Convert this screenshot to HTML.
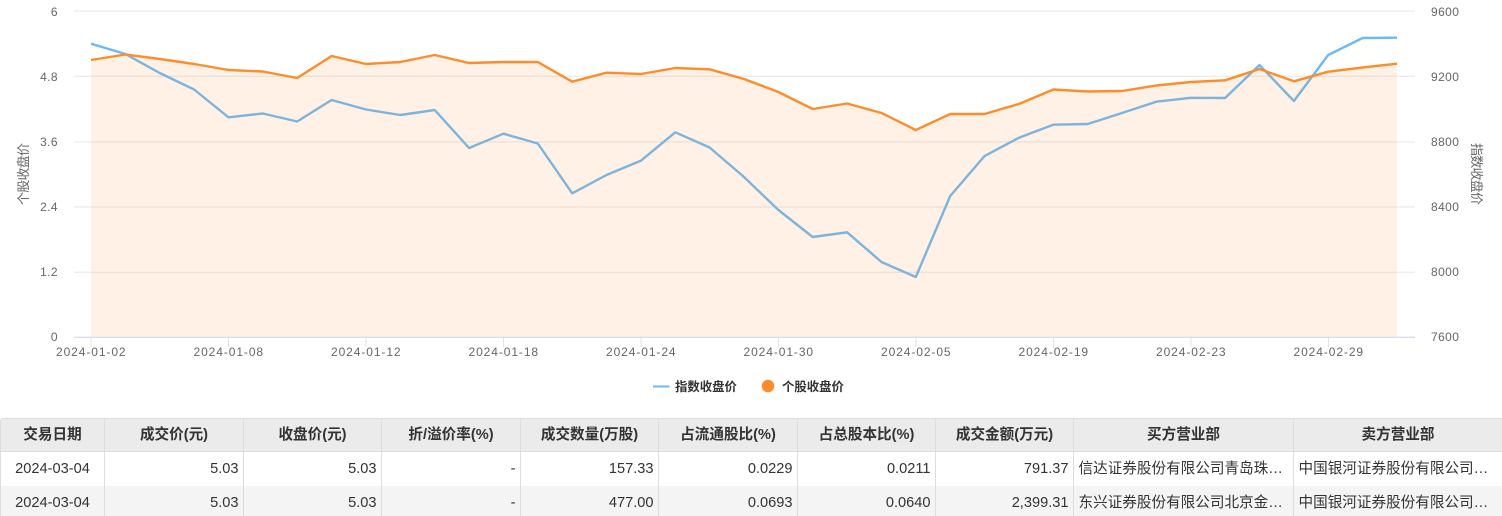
<!DOCTYPE html>
<html lang="zh-CN">
<head>
<meta charset="utf-8">
<title>成交走势</title>
<style>
html,body{margin:0;padding:0;background:#fff;width:1502px;height:516px;overflow:hidden}
body{position:relative;font-family:"Liberation Sans","Noto Sans CJK SC",sans-serif;color:#333}
svg{position:absolute;left:0;top:0}
svg text{font-family:"Liberation Sans","Noto Sans CJK SC",sans-serif}
.ax{font-size:12px;fill:#666;letter-spacing:.4px}
.nm{font-size:13px;fill:#666}
.lg{font-size:12.4px;font-weight:bold;fill:#333}
.c{position:absolute;box-sizing:border-box;white-space:nowrap;overflow:hidden;font-size:14.6px;line-height:34px;height:34px;color:#333}
.h{font-weight:bold;text-align:center;background:#ebebeb;top:418px;height:34px;line-height:32px;border-top:1px solid #ddd;border-bottom:1px solid #ddd;border-right:1px solid #ddd}
.r1,.r2{border-right:1px solid #ddd;text-align:right;padding-right:4.5px}
.r1{top:452px;background:#fff}
.r2{top:486px;background:#f4f4f4;height:30px}
.ctr{text-align:center;padding-right:0}
.lft{text-align:left;padding-right:0;padding-left:4.5px}
</style>
</head>
<body>
<svg width="1502" height="400" viewBox="0 0 1502 400" xmlns="http://www.w3.org/2000/svg">
  <g stroke="#e6e6e6" stroke-width="1" fill="none">
    <path d="M74 11H1415M74 76.3H1415M74 141.9H1415M74 207H1415M74 272.3H1415"/>
  </g>
  <polyline fill="none" stroke="#6db9f4" stroke-width="2.4" stroke-linejoin="round" points="91,43.7 125.4,54 159.7,73 194.1,89.5 228.5,117.3 262.8,113.5 297.2,121.5 331.6,100 366,109.5 400.3,115 434.7,110 469.1,148 503.4,133.7 537.8,143.5 572.2,193.3 606.5,175 640.9,160.7 675.3,132.3 709.6,147.5 744,177 778.4,210 812.7,237 847.1,232.3 881.5,262 915.8,277 950.2,196 984.6,156 1018.9,137.7 1053.3,124.7 1087.7,124 1122,113 1156.4,101.7 1190.8,97.8 1225.1,98 1259.5,65 1293.9,101 1328.2,55 1362.6,38 1397,37.7"/>
  <polygon fill="#ff8c2b" fill-opacity="0.12" points="91,337 91,60 125.4,54.5 159.7,59 194.1,64 228.5,70 262.8,71.5 297.2,78 331.6,56 366,64 400.3,62 434.7,55 469.1,63 503.4,62 537.8,62 572.2,81.7 606.5,72.7 640.9,74 675.3,68 709.6,69.3 744,79 778.4,92 812.7,109 847.1,103.5 881.5,113 915.8,130 950.2,114 984.6,114 1018.9,104 1053.3,89.5 1087.7,91.5 1122,91 1156.4,85.5 1190.8,82 1225.1,80.3 1259.5,69 1293.9,81.3 1328.2,71.7 1362.6,67.5 1397,63.7 1397,337"/>
  <polyline fill="none" stroke="#ff8c2b" stroke-width="2.4" stroke-linejoin="round" points="91,60 125.4,54.5 159.7,59 194.1,64 228.5,70 262.8,71.5 297.2,78 331.6,56 366,64 400.3,62 434.7,55 469.1,63 503.4,62 537.8,62 572.2,81.7 606.5,72.7 640.9,74 675.3,68 709.6,69.3 744,79 778.4,92 812.7,109 847.1,103.5 881.5,113 915.8,130 950.2,114 984.6,114 1018.9,104 1053.3,89.5 1087.7,91.5 1122,91 1156.4,85.5 1190.8,82 1225.1,80.3 1259.5,69 1293.9,81.3 1328.2,71.7 1362.6,67.5 1397,63.7"/>
  <path d="M74 337.3H1415" stroke="#d8deef" stroke-width="1.3" fill="none"/>
  <path d="M91 338V347M228.5 338V347M366 338V347M503.5 338V347M641 338V347M778.5 338V347M916 338V347M1053.5 338V347M1191 338V347M1328.5 338V347" stroke="#dde2f2" stroke-width="1" fill="none"/>

  <g class="ax" text-anchor="end">
    <text x="58" y="16">6</text>
    <text x="58" y="81">4.8</text>
    <text x="58" y="146">3.6</text>
    <text x="58" y="211">2.4</text>
    <text x="58" y="276">1.2</text>
    <text x="58" y="341">0</text>
  </g>
  <g class="ax">
    <text x="1431" y="16">9600</text>
    <text x="1431" y="81">9200</text>
    <text x="1431" y="146">8800</text>
    <text x="1431" y="211">8400</text>
    <text x="1431" y="276">8000</text>
    <text x="1431" y="341">7600</text>
  </g>
  <g class="ax">
    <text x="56" y="356" textLength="70">2024-01-02</text>
    <text x="193.5" y="356" textLength="70">2024-01-08</text>
    <text x="331" y="356" textLength="70">2024-01-12</text>
    <text x="468.5" y="356" textLength="70">2024-01-18</text>
    <text x="606" y="356" textLength="70">2024-01-24</text>
    <text x="743.5" y="356" textLength="70">2024-01-30</text>
    <text x="881" y="356" textLength="70">2024-02-05</text>
    <text x="1018.5" y="356" textLength="70">2024-02-19</text>
    <text x="1156" y="356" textLength="70">2024-02-23</text>
    <text x="1293.5" y="356" textLength="70">2024-02-29</text>
  </g>
  <text class="nm" transform="translate(28 205) rotate(-90)" textLength="62">个股收盘价</text>
  <text class="nm" transform="translate(1472 143) rotate(90)" textLength="62">指数收盘价</text>

  <path d="M653 386.5H669.5" stroke="#6db9f4" stroke-width="2" fill="none"/>
  <text class="lg" x="675" y="391">指数收盘价</text>
  <circle cx="768" cy="386" r="6.3" fill="#ff8c2b"/>
  <text class="lg" x="782" y="391">个股收盘价</text>
</svg>

<div class="c h" style="left:0;width:105px;border-left:1px solid #ddd;border-top-left-radius:3px">交易日期</div>
<div class="c h" style="left:105px;width:139px">成交价(元)</div>
<div class="c h" style="left:244px;width:138px">收盘价(元)</div>
<div class="c h" style="left:382px;width:139px">折/溢价率(%)</div>
<div class="c h" style="left:521px;width:138px">成交数量(万股)</div>
<div class="c h" style="left:659px;width:139px">占流通股比(%)</div>
<div class="c h" style="left:798px;width:138px">占总股本比(%)</div>
<div class="c h" style="left:936px;width:138px">成交金额(万元)</div>
<div class="c h" style="left:1074px;width:220px">买方营业部</div>
<div class="c h" style="left:1294px;width:208px;border-right:0">卖方营业部</div>

<div class="c r1 ctr" style="left:0;width:105px;border-left:1px solid #ddd">2024-03-04</div>
<div class="c r1" style="left:105px;width:139px">5.03</div>
<div class="c r1" style="left:244px;width:138px">5.03</div>
<div class="c r1" style="left:382px;width:139px">-</div>
<div class="c r1" style="left:521px;width:138px">157.33</div>
<div class="c r1" style="left:659px;width:139px">0.0229</div>
<div class="c r1" style="left:798px;width:138px">0.0211</div>
<div class="c r1" style="left:936px;width:138px">791.37</div>
<div class="c r1 lft" style="left:1074px;width:220px">信达证券股份有限公司青岛珠…</div>
<div class="c r1 lft" style="left:1294px;width:208px;border-right:0">中国银河证券股份有限公司…</div>

<div class="c r2 ctr" style="left:0;width:105px;border-left:1px solid #ddd">2024-03-04</div>
<div class="c r2" style="left:105px;width:139px">5.03</div>
<div class="c r2" style="left:244px;width:138px">5.03</div>
<div class="c r2" style="left:382px;width:139px">-</div>
<div class="c r2" style="left:521px;width:138px">477.00</div>
<div class="c r2" style="left:659px;width:139px">0.0693</div>
<div class="c r2" style="left:798px;width:138px">0.0640</div>
<div class="c r2" style="left:936px;width:138px">2,399.31</div>
<div class="c r2 lft" style="left:1074px;width:220px">东兴证券股份有限公司北京金…</div>
<div class="c r2 lft" style="left:1294px;width:208px;border-right:0">中国银河证券股份有限公司…</div>
</body>
</html>
